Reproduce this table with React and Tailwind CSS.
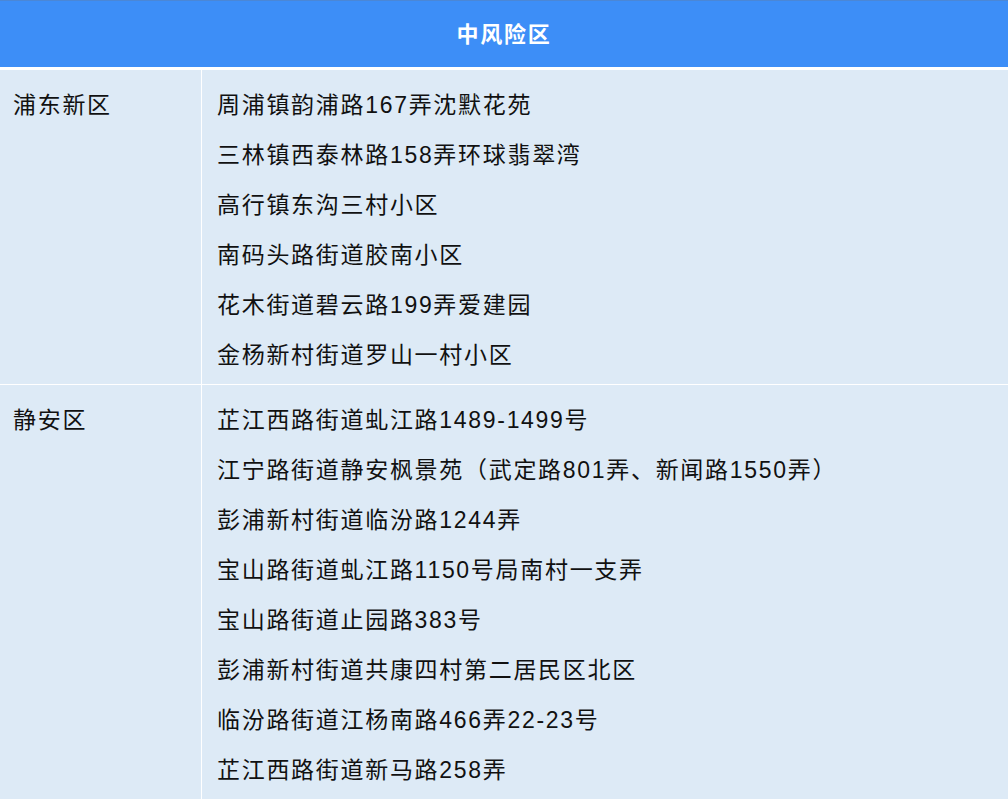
const rows = [
  {
    district: "浦东新区",
    places: [
      "周浦镇韵浦路167弄沈默花苑",
      "三林镇西泰林路158弄环球翡翠湾",
      "高行镇东沟三村小区",
      "南码头路街道胶南小区",
      "花木街道碧云路199弄爱建园",
      "金杨新村街道罗山一村小区",
    ],
  },
  {
    district: "静安区",
    places: [
      "芷江西路街道虬江路1489-1499号",
      "江宁路街道静安枫景苑（武定路801弄、新闻路1550弄）",
      "彭浦新村街道临汾路1244弄",
      "宝山路街道虬江路1150号局南村一支弄",
      "宝山路街道止园路383号",
      "彭浦新村街道共康四村第二居民区北区",
      "临汾路街道江杨南路466弄22-23号",
      "芷江西路街道新马路258弄",
    ],
  },
];

const App = () => (
  <div
    className="w-[1008px] bg-white text-[#111] text-[23px] tracking-[1.7px]"
    style={{ fontFamily: '"Liberation Sans", "Noto Sans CJK SC", sans-serif' }}
  >
    {/* 表头 */}
    <div className="h-[67px] border-t border-[#4b87d6] bg-[#3d8ef7] flex items-center justify-center text-white font-bold text-[22px]">
      中风险区
    </div>

    <div className="mt-[3px] flex flex-col gap-px">
      {rows.map((row) => (
        <div key={row.district} className="flex gap-px">
          <div className="w-[201px] shrink-0 bg-[#ddeaf6] pl-[13px] pt-[10px]">
            <div className="h-[50px] flex items-center">{row.district}</div>
          </div>
          <div className="flex-1 bg-[#ddeaf6] pl-[15px] pt-[10px] pb-[4px]">
            {row.places.map((p) => (
              <div key={p} className="h-[50px] flex items-center whitespace-nowrap">
                {p}
              </div>
            ))}
          </div>
        </div>
      ))}
    </div>
  </div>
);

export default App;
